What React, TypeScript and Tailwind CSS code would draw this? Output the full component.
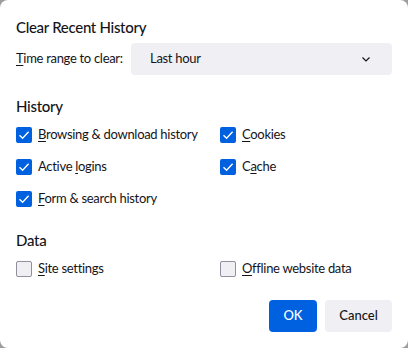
import React from 'react';

const font = { fontFamily: 'Lato, "Noto Sans", sans-serif' };

function Check({ checked, label, u }: { checked: boolean; label: string; u: number }) {
  return (
    <label className="flex items-center h-[20px] gap-[6px] text-[13px] tracking-[-0.3px] text-[#15141a] whitespace-nowrap">
      {checked ? (
        <span className="w-4 h-4 rounded-[2px] bg-[#0061e0] flex items-center justify-center">
          <svg width="12" height="12" viewBox="0 0 12 12" fill="none">
            <path d="M1.5 6.2 L4.6 9.2 L10.6 2.8" stroke="white" strokeWidth="1.4" />
          </svg>
        </span>
      ) : (
        <span className="w-4 h-4 rounded-[2px] bg-[#f0f0f4] border border-[#8f8f9d]" />
      )}
      <span>
        {label.slice(0, u)}
        <span className="underline underline-offset-2">{label[u]}</span>
        {label.slice(u + 1)}
      </span>
    </label>
  );
}

export default function App() {
  return (
    <div className="w-[408px] h-[348px] bg-[#9d9d9d]" style={font}>
      <div className="w-full h-full bg-white rounded-[8px] px-4 pt-[17px] text-[#15141a]">
        <h1 className="text-[15px] leading-[20px] font-medium tracking-[-0.3px]">Clear Recent History</h1>
        <div className="flex items-center mt-[6px] h-[32px]">
          <span className="text-[13px] w-[115px] whitespace-nowrap tracking-[-0.3px]">
            <span className="underline underline-offset-2">T</span>ime range to clear:
          </span>
          <div className="flex-1 h-full bg-[#f0f0f4] rounded-[4px] flex items-center justify-between pl-[19px] pr-[20px] text-[13px] tracking-[-0.3px]">
            <span>Last hour</span>
            <svg width="12" height="12" viewBox="0 0 12 12" fill="none">
              <path d="M2.5 4.5 L6 8 L9.5 4.5" stroke="#15141a" strokeWidth="1.2" />
            </svg>
          </div>
        </div>

        <h2 className="text-[15px] leading-[20px] font-medium tracking-[-0.3px] mt-[21px]">History</h2>
        <div className="grid grid-cols-[204px_1fr] gap-y-[12px] mt-[9px]">
          <Check checked label="Browsing & download history" u={0} />
          <Check checked label="Cookies" u={0} />
          <Check checked label="Active logins" u={7} />
          <Check checked label="Cache" u={1} />
          <Check checked label="Form & search history" u={0} />
        </div>

        <h2 className="text-[15px] leading-[20px] font-medium tracking-[-0.3px] mt-[21px]">Data</h2>
        <div className="grid grid-cols-[204px_1fr] mt-[9px]">
          <Check checked={false} label="Site settings" u={0} />
          <Check checked={false} label="Offline website data" u={0} />
        </div>

        <div className="flex justify-end gap-2 mt-[21px]">
          <button className="h-[32px] w-[48px] rounded-[4px] bg-[#0061e0] text-white text-[13px] font-medium">OK</button>
          <button className="h-[32px] w-[67px] rounded-[4px] bg-[#f0f0f4] text-[#15141a] text-[13px] font-medium">Cancel</button>
        </div>
      </div>
    </div>
  );
}
